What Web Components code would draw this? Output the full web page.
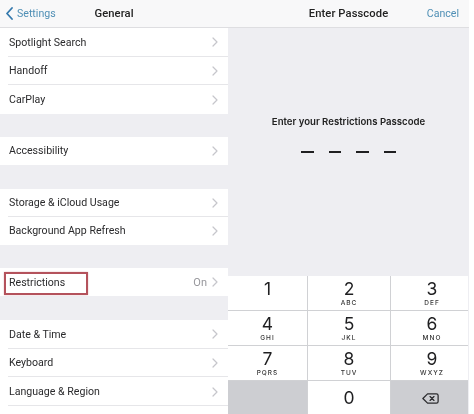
<!DOCTYPE html>
<html><head><meta charset="utf-8"><title>Restrictions Passcode</title>
<style>
html,body{margin:0;padding:0;background:#fff}
body{width:474px;height:414px;overflow:hidden;font-family:Roboto,"Liberation Sans",sans-serif;color:#222}
app-shot{filter:blur(.45px)}
</style></head><body>
<app-shot>
  <settings-panel slot="left">
    <nav-bar title="General"><span slot="left"><back-link>Settings</back-link></span></nav-bar>
    <row-group h="28.67"><set-row>Spotlight Search</set-row><set-row>Handoff</set-row><set-row>CarPlay</set-row></row-group>
    <row-group h="28" style="margin-top:23px"><set-row>Accessibility</set-row></row-group>
    <row-group h="28" style="margin-top:24px"><set-row>Storage &amp; iCloud Usage</set-row><set-row>Background App Refresh</set-row></row-group>
    <row-group h="28.5" style="margin-top:23px"><set-row value="On" marked>Restrictions</set-row></row-group>
    <row-group h="28.67" style="margin-top:23.5px"><set-row>Date &amp; Time</set-row><set-row>Keyboard</set-row><set-row>Language &amp; Region</set-row><set-row blank></set-row></row-group>
  </settings-panel>
  <passcode-panel slot="right">
    <nav-bar title="Enter Passcode"><span slot="right" style="color:#4f8fb5">Cancel</span></nav-bar>
    <passcode-prompt>Enter your Restrictions Passcode</passcode-prompt>
    <key-pad>
      <pad-key d="1" l=""></pad-key><pad-key d="2" l="ABC"></pad-key><pad-key d="3" l="DEF" end></pad-key>
      <pad-key d="4" l="GHI"></pad-key><pad-key d="5" l="JKL"></pad-key><pad-key d="6" l="MNO" end></pad-key>
      <pad-key d="7" l="PQRS"></pad-key><pad-key d="8" l="TUV"></pad-key><pad-key d="9" l="WXYZ" end></pad-key>
      <pad-key dark></pad-key><pad-key d="0"></pad-key>
      <pad-key dark back><svg width="17" height="11" viewBox="0 0 20 13" fill="none" stroke="#2b2b2e" stroke-width="1.5" stroke-linejoin="round" stroke-linecap="round"><path d="M6.500 1H17a2 2 0 0 1 2 2v7a2 2 0 0 1-2 2H6.500L1 6.500Z"/><path d="M9.500 4.200l4.600 4.600M14.100 4.200l-4.600 4.600"/></svg></pad-key>
    </key-pad>
  </passcode-panel>
</app-shot>
<script>
function el(name, css, html, setup){
  customElements.define(name, class extends HTMLElement{
    connectedCallback(){
      if(this.shadowRoot) return;
      const r=this.attachShadow({mode:'open'});
      r.innerHTML='<style>'+css+'</style>'+(typeof html==='function'?html(this):html);
      if(setup) setup(this,r);
    }
  });
}
el('app-shot',':host{display:flex;width:474px;height:414px;overflow:hidden}','<slot name="left"></slot><slot name="right"></slot>');
el('settings-panel',':host{display:flex;flex-direction:column;width:228px;height:414px;flex:none;background:#eeeef2;overflow:hidden}','<slot></slot>');
el('passcode-panel',':host{display:flex;flex-direction:column;width:241px;height:414px;flex:none;background:#eeeef2}','<slot></slot>');
el('nav-bar',`:host{display:grid;grid-template-columns:1fr auto 1fr;align-items:center;height:27px;flex:none;background:#f8f8f9;border-bottom:1px solid #dedee1;font-size:10.6px}
 .t{font-weight:500;color:#222;font-size:11.2px;letter-spacing:.1px}
 .l{justify-self:start;padding-left:6px}.r{justify-self:end;padding-right:10px}`,
 h=>`<div class="l"><slot name="left"></slot></div><div class="t">${h.getAttribute('title')}</div><div class="r"><slot name="right"></slot></div>`);
el('back-link',':host{display:flex;align-items:center;gap:4px;color:#4f8fb5}svg{display:block}',
 '<svg width="7" height="13" viewBox="0 0 7 13" fill="none" stroke="#3479ad" stroke-width="1.8" stroke-linecap="round" stroke-linejoin="round"><path d="M6 1 1 6.500 6 12"/></svg><slot></slot>');
el('row-group',':host{display:block;background:#fff;flex:none}','<slot></slot>',(h)=>{
  h.style.setProperty('--row-h',(h.getAttribute('h')||28)+'px');
});
el('set-row',`:host{display:flex;align-items:center;height:var(--row-h);box-sizing:border-box;padding:0 10px 0 9px;position:relative;font-size:10.6px;color:#2a2a2c;background:#fff}
 :host(:not(:last-child))::after{content:"";position:absolute;left:8px;right:0;bottom:0;height:1px;background:#e6e6e9}
 .s{flex:1}.v{color:#97979c;margin-right:5px;font-size:11px}
 svg{display:block;flex:none}
 .box{position:absolute;left:4px;top:4px;width:80px;height:19px;border:2px solid #b4525c;box-shadow:0 0 1.5px #b4525c66}`,
 h=>h.hasAttribute('blank')?'':`<span class="s"><slot></slot></span>${h.hasAttribute('value')?`<span class="v">${h.getAttribute('value')}</span>`:''}<svg width="6" height="10" viewBox="0 0 6 10" fill="none" stroke="#c6c6cb" stroke-width="1.2" stroke-linecap="round" stroke-linejoin="round"><path d="M1 1l4 4-4 4"/></svg>${h.hasAttribute('marked')?'<div class="box"></div>':''}`);
el('passcode-prompt',`:host{display:flex;flex-direction:column;align-items:center;flex:1;box-sizing:border-box;padding-top:88px;font-family:Inter,Roboto,sans-serif;font-size:9.6px;font-weight:600;color:#222}
 .d{display:flex;gap:15px;margin-top:24px}.d i{display:block;width:12.500px;height:2px;background:#1f1f21}`,
 '<slot></slot><div class="d"><i></i><i></i><i></i><i></i></div>');
el('key-pad',`:host{display:grid;grid-template-columns:79px 82px 77px;grid-auto-rows:34px;gap:1px;width:240px;height:138px;flex:none;background:#d0d1d4}`,'<slot></slot>');
el('pad-key',`:host{display:flex;flex-direction:column;align-items:center;justify-content:center;box-sizing:border-box;background:#fff;color:#1f1f21;font-family:Inter,Roboto,sans-serif}
 :host([dark]){background:#cdced2}
 :host([end]){padding-left:5px}
 :host([back]){padding-left:1px}
 .n{font-size:17.500px;line-height:18px;font-weight:400}
 .a{font-size:6.500px;line-height:8px;height:8px;letter-spacing:1px;margin-top:1px;font-weight:500;color:#333}`,
 h=>{const d=h.getAttribute('d'),l=h.getAttribute('l');
   return (d?`<div class="n">${d}</div>`:'')+(l!==null?`<div class="a">${l}</div>`:'')+'<slot></slot>';});
</script>
</body></html>
